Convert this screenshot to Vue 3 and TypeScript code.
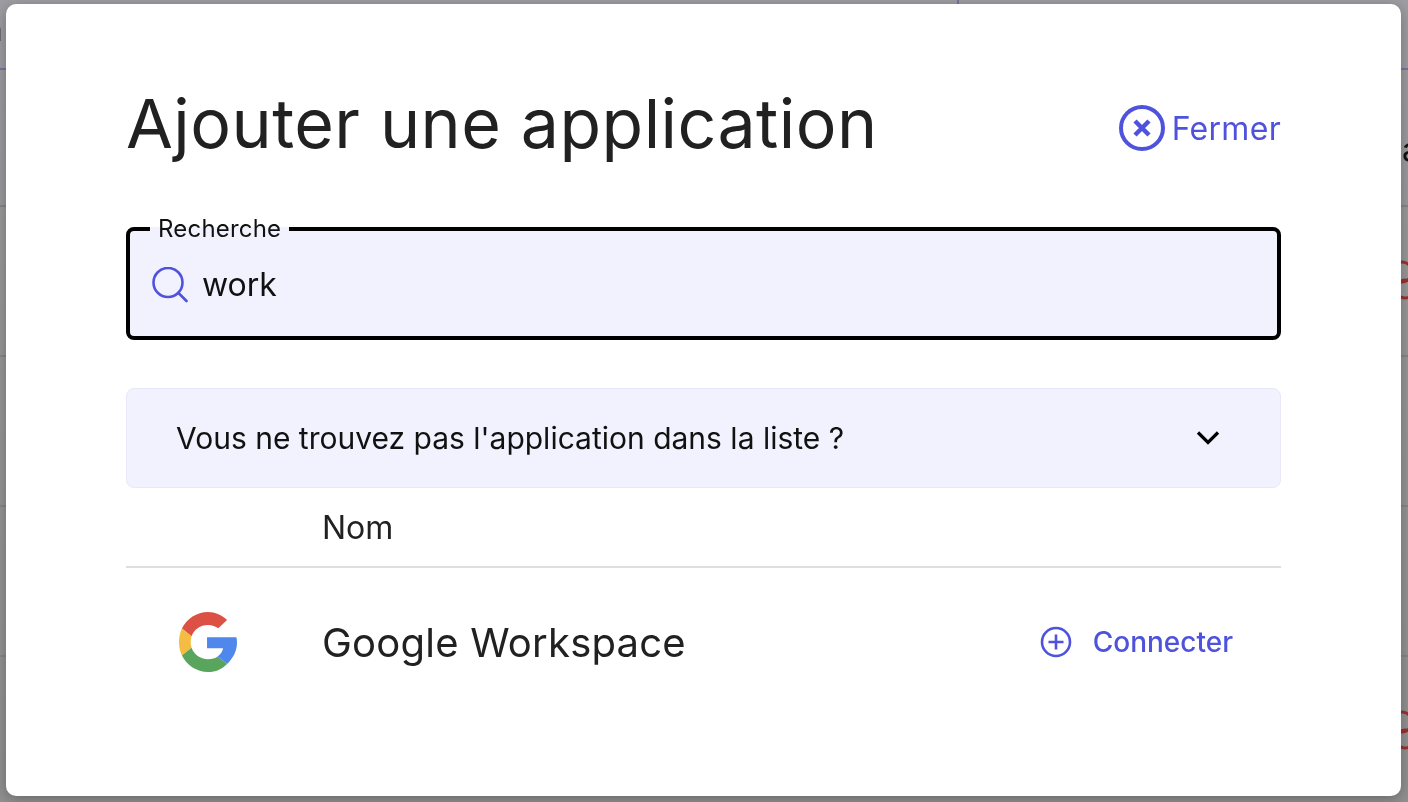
<template>
  <div class="page">
    <!-- page behind the overlay: only slivers show around the dialog -->
    <div class="behind">
      <span class="behind-letter left">n</span>
      <span class="behind-letter right">a</span>
      <i class="tab-line"></i>
      <i class="col-line"></i>
      <i v-for="y in rowLines" :key="y" class="row-line" :style="{ top: y + 'px' }"></i>
      <svg v-for="y in statusIcons" :key="y" class="status-icon" :style="{ top: y + 'px' }" width="30" height="40" viewBox="0 0 30 40" fill="none" stroke="#9c3030" stroke-width="3">
        <circle cx="12" cy="12" r="10" />
        <circle cx="15" cy="29" r="9" />
      </svg>
    </div>

    <section class="dialog">
      <header class="dialog-head">
        <h1>Ajouter une application</h1>
        <button class="close" type="button">
          <svg width="46" height="46" viewBox="0 0 46 46" fill="none" stroke="#4f52dc">
            <circle cx="23" cy="23" r="21" stroke-width="4" />
            <path d="M16 16l14 14M30 16L16 30" stroke-width="4.5" />
          </svg>
          Fermer
        </button>
      </header>

      <fieldset class="search">
        <legend>Recherche</legend>
        <svg width="36" height="36" viewBox="0 0 36 36" fill="none" stroke="#4f52dc" stroke-width="2.6" stroke-linecap="round">
          <circle cx="16" cy="15.5" r="14.5" />
          <path d="M26.5 26l8 8" />
        </svg>
        <span class="search-value">work</span>
      </fieldset>

      <div class="hint">
        <span>Vous ne trouvez pas l'application dans la liste ?</span>
        <svg width="24" height="24" viewBox="0 0 24 24" fill="none" stroke="#000" stroke-width="3.2">
          <path d="M2 6.500l10 10 10-10" />
        </svg>
      </div>

      <div class="table-head">
        <span class="name-col">Nom</span>
      </div>

      <div v-for="app in apps" :key="app.name" class="row">
        <div class="logo-col">
          <svg width="58" height="60" viewBox="0 0 48 48" preserveAspectRatio="none">
            <path fill="#dd5144" d="M39.800 6.400C35.500 2.400 30 0 24 0 14.600 0 6.500 5.400 2.400 13.200l8 6.200C12.300 14 17.600 10.300 24 10.300c3.300 0 6.200 1 8.500 2.700z" />
            <path fill="#f4bc42" d="M2.400 13.200C.9 16.400 0 20 0 24s.9 7.600 2.400 10.800l8-6.200c-.5-1.500-.7-3-.7-4.600s.2-3.100.7-4.600z" />
            <path fill="#5aa55e" d="M2.400 34.800l8-6.200c1.900 5.300 7.200 9.100 13.600 9.100 3.200 0 6-.8 8-2.200l7.800 6C35.600 45.600 30.400 48 24 48 14.600 48 6.500 42.600 2.400 34.800z" />
            <path fill="#4f87ec" d="M47.500 20.200H23.200V29h13.300c-.6 2.800-2.200 5-4.500 6.500l7.800 6C44.500 37.200 48 31.200 48 24.500c0-1.500-.2-3-.5-4.300z" />
          </svg>
        </div>
        <span class="app-name">{{ app.name }}</span>
        <button class="connect" type="button">
          <svg width="32" height="32" viewBox="0 0 32 32" fill="none" stroke="#4f52dc" stroke-width="2.6">
            <circle cx="16" cy="16" r="14" />
            <path d="M16 8.500v15M8.500 16h15" />
          </svg>
          Connecter
        </button>
      </div>
    </section>
  </div>
</template>

<script setup lang="ts">
const rowLines: number[] = [205, 355, 505, 655];
const statusIcons: number[] = [260, 710];
const apps = [{ name: "Google Workspace" }];
</script>

<style>
html,
body {
  margin: 0;
  overflow: hidden;
}
</style>

<style scoped>
.page {
  position: relative;
  box-sizing: border-box;
  width: 1408px;
  height: 802px;
  padding: 4px 7px 6px 6px;
  overflow: hidden;
  font-family: Inter, "Liberation Sans", sans-serif;
}
.behind {
  position: absolute;
  inset: 0;
  background: linear-gradient(180deg, #9d9da2 0, #979797 40%, #909090 100%);
}
.behind-letter {
  position: absolute;
  font-size: 32px;
  line-height: 1;
  color: #111;
  transform: translateZ(0);
}
.behind-letter.left {
  left: -16px;
  top: 14px;
  color: #333;
}
.behind-letter.right {
  left: 1402px;
  top: 134px;
}
.tab-line {
  position: absolute;
  left: 0;
  top: 68px;
  width: 100%;
  height: 2px;
  background: #76769c;
}
.col-line {
  position: absolute;
  left: 957px;
  top: 0;
  width: 2px;
  height: 4px;
  background: #76769c;
}
.row-line {
  position: absolute;
  left: 0;
  width: 100%;
  height: 2px;
  background: #868686;
}
.status-icon {
  position: absolute;
  left: 1390px;
}
.dialog {
  position: relative;
  box-sizing: border-box;
  height: 792px;
  padding: 0 120px;
  background: #fff;
  border-radius: 10px;
  box-shadow: 0 3px 14px rgba(0, 0, 0, 0.28);
}
.dialog-head {
  display: flex;
  align-items: center;
  justify-content: space-between;
  box-sizing: border-box;
  height: 216px;
  padding-top: 22px;
}
.dialog-head h1 {
  margin: 0;
  font-size: 68px;
  font-weight: 440;
  letter-spacing: 0.45px;
  line-height: 76px;
  color: #212121;
}
.close {
  display: flex;
  align-items: center;
  gap: 7px;
  margin-top: 10px;
  padding: 0;
  border: 0;
  background: none;
  font: inherit;
  font-size: 32px;
  font-weight: 420;
  letter-spacing: 0.3px;
  color: #4f52dc;
}
.search {
  display: flex;
  align-items: center;
  box-sizing: border-box;
  height: 120px;
  margin: 0;
  padding: 0 0 4px 22px;
  gap: 14px;
  border: 4px solid #000;
  border-radius: 8px;
  background: #f2f2fe;
}
.search legend {
  margin-left: -2px;
  padding: 0 8px;
  font-size: 24px;
  letter-spacing: 0.2px;
  line-height: 18px;
  color: #111;
}
.search-value {
  margin-bottom: 2px;
  font-size: 32px;
  color: #111;
}
.hint {
  display: flex;
  align-items: center;
  justify-content: space-between;
  box-sizing: border-box;
  height: 100px;
  margin-top: 48px;
  padding: 0 60px 0 49px;
  border: 1px solid #e8e8f8;
  border-radius: 8px;
  background: #f2f2fe;
  font-size: 30px;
  color: #111;
}
.table-head {
  box-sizing: border-box;
  display: flex;
  align-items: center;
  height: 80px;
  border-bottom: 2px solid #dfdfdf;
  padding-left: 196px;
  font-size: 32px;
  color: #212121;
}
.row {
  display: flex;
  align-items: center;
  height: 148px;
}
.logo-col {
  width: 196px;
  display: flex;
  justify-content: center;
  box-sizing: border-box;
  padding-right: 33px;
}
.app-name {
  flex: 1;
  font-size: 40px;
  font-weight: 440;
  letter-spacing: 0.23px;
  color: #212121;
}
.connect {
  display: flex;
  align-items: center;
  gap: 21px;
  margin-right: 48px;
  padding: 0;
  border: 0;
  background: none;
  font: inherit;
  font-size: 28px;
  font-weight: 450;
  color: #4f52dc;
}
</style>
